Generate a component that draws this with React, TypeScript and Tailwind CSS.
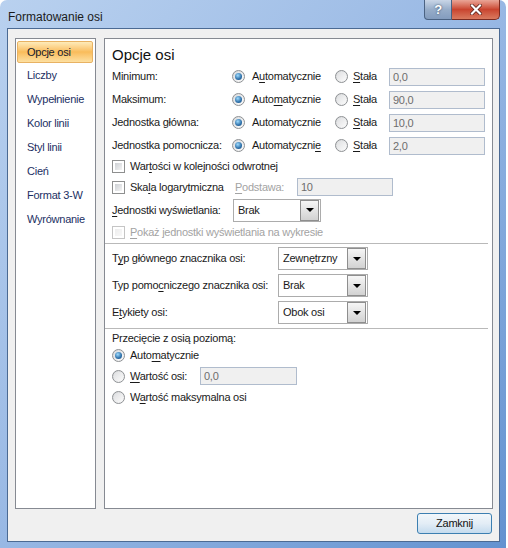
import React from 'react';

const navItems = ['Liczby', 'Wypełnienie', 'Kolor linii', 'Styl linii', 'Cień', 'Format 3-W', 'Wyrównanie'];

// underlined access-key letter
const U: React.FC<{ children: React.ReactNode }> = ({ children }) => <span className="underline underline-offset-[2px]">{children}</span>;

const Radio: React.FC<{ on?: boolean }> = ({ on }) => (
  <span className="relative inline-block w-[13px] h-[13px] shrink-0 rounded-full border border-[#8e9194] bg-gradient-to-br from-[#d6d8da] to-[#fbfbfb]">
    <span className="absolute inset-[1px] rounded-full bg-gradient-to-br from-[#dfe0e2] to-[#fafafa]" />
    {on && (
      <span className="absolute left-[2px] top-[2px] w-[7px] h-[7px] rounded-full bg-[radial-gradient(circle_at_40%_35%,#9fdcff,#2d6fa8_60%,#1d4f80)]" />
    )}
  </span>
);

const Check: React.FC<{ disabled?: boolean }> = ({ disabled }) => (
  <span className={`inline-block w-[13px] h-[13px] shrink-0 border p-[2px] bg-white ${disabled ? 'border-[#c5c5c5]' : 'border-[#8e8f8f]'}`}>
    <span className={`block w-full h-full bg-gradient-to-br ${disabled ? 'from-[#eeeeee] to-[#f8f8f8]' : 'from-[#cdd0d4] to-[#f4f4f4]'}`} />
  </span>
);

const Field: React.FC<{ value: string; w: string }> = ({ value, w }) => (
  <div className={`${w} h-[18px] border border-[#b0bccd] bg-[#f0f0f0] text-[#6d6d6d] pl-[3px] leading-[16px]`}>{value}</div>
);

const Select: React.FC<{ value: string; w: string }> = ({ value, w }) => (
  <div className={`${w} h-[23px] border border-[#acacac] bg-white flex items-center justify-between pl-[4px] pr-[1px]`}>
    <span>{value}</span>
    <span className="w-[19px] h-[21px] border border-[#8e8e8e] bg-gradient-to-b from-[#f6f6f6] to-[#d2d2d2] flex items-center justify-center">
      <span className="w-0 h-0 border-l-[4px] border-r-[4px] border-t-[4px] border-l-transparent border-r-transparent border-t-black" />
    </span>
  </div>
);

const Sep: React.FC = () => <div className="-ml-[7px] mr-[4px] h-px bg-[#b9b9b9]" />;

export default function App() {
  return (
    <div className="w-[508px] h-[548px] bg-white font-['Liberation_Sans',Arial,sans-serif] text-[11px] tracking-[-0.25px] text-[#1a1a1a]">
      <div className="w-[506px] h-[548px] rounded-t-[7px] bg-gradient-to-br from-[#b9d1ef] via-[#98b8e4] to-[#6392d0] flex flex-col">
        {/* title bar */}
        <div className="h-[28px] flex items-start">
          <div className="pl-[8px] pt-[8px] text-[12px] tracking-normal text-[#1b1b1b]">Formatowanie osi</div>
          <div className="flex-1" />
          <div className="w-[28px] h-[20px] rounded-bl-[4px] border border-t-0 border-[#4a6282] bg-gradient-to-b from-[#c9d6e7] via-[#97adc9] to-[#839cbe] flex items-center justify-center text-white font-bold text-[13px] [text-shadow:0_0_2px_#1f3553]">
            ?
          </div>
          <div className="w-[48px] h-[20px] mr-[6px] rounded-br-[5px] border border-t-0 border-l-0 border-[#7c2b21] bg-gradient-to-b from-[#e9a597] via-[#c9442f] to-[#d97a5f] flex items-center justify-center">
            <svg width="12" height="11" viewBox="0 0 12 11">
              <path d="M2 1.5 L10 9.5 M10 1.5 L2 9.5" stroke="#4d1a12" strokeWidth="3.6" strokeLinecap="square" />
              <path d="M2 1.5 L10 9.5 M10 1.5 L2 9.5" stroke="#ffffff" strokeWidth="2.2" strokeLinecap="square" />
            </svg>
          </div>
        </div>

        {/* client area */}
        <div className="ml-[7px] w-[493px] h-[514px] border border-[#4b6a93] bg-[#f0f0f0] flex flex-col">
          <div className="flex pl-[7px] pt-[9px] gap-[8px]">
            {/* nav */}
            <div className="w-[81px] h-[471px] border border-[#868a92] bg-white text-[#1c2f63]">
              <div className="mt-[2px] ml-px mr-[2px] h-[22px] rounded-[2px] border border-[#e8b263] bg-gradient-to-b from-[#feebb9] via-[#f9bc5a] to-[#fde0a0] flex items-center pl-[9px] text-[#141a2e]">
                Opcje osi
              </div>
              {navItems.map((n) => (
                <div key={n} className="h-[24px] flex items-center pl-[11px]">{n}</div>
              ))}
            </div>

            {/* main panel */}
            <div className="w-[389px] h-[471px] border border-[#868a92] bg-white pl-[7px] pt-[6px]">
              <div className="h-[20px] flex items-center text-[15px] tracking-normal text-[#111]">Opcje osi</div>

              {[
                ['Minimum:', <>A<U>u</U>tomatycznie</>, '0,0'],
                ['Maksimum:', <>Auto<U>m</U>atycznie</>, '90,0'],
                ['Jednostka główna:', <>Automatycznie</>, '10,0'],
                ['Jednostka pomocnicza:', <>Automatyczni<U>e</U></>, '2,0'],
              ].map(([label, auto, val], i) => (
                <div key={i} className="h-[23px] flex items-center">
                  <div className="w-[120px]">{label}</div>
                  <div className="w-[103px] flex items-center gap-[7px]">
                    <Radio on />
                    <span>{auto}</span>
                  </div>
                  <div className="w-[54px] flex items-center gap-[5px]">
                    <Radio />
                    <span><U>S</U>tała</span>
                  </div>
                  <Field value={val as string} w="w-[96px]" />
                </div>
              ))}

              <div className="h-[19px] flex items-center gap-[5px]">
                <Check />
                <span>War<U>t</U>ości w kolejności odwrotnej</span>
              </div>
              <div className="h-[22px] flex items-center">
                <div className="w-[123px] flex items-center gap-[5px]">
                  <Check />
                  <span>Ska<U>l</U>a logarytmiczna</span>
                </div>
                <div className="w-[62px] text-[#a3a3a3]"><U>P</U>odstawa:</div>
                <Field value="10" w="w-[96px]" />
              </div>
              <div className="h-[24px] flex items-center">
                <div className="w-[121px]"><U>J</U>ednostki wyświetlania:</div>
                <Select value="Brak" w="w-[88px]" />
              </div>
              <div className="h-[20px] flex items-center gap-[5px] text-[#a3a3a3]">
                <Check disabled />
                <span><U>P</U>okaż jednostki wyświetlania na wykresie</span>
              </div>
              <div className="mt-px">
                <Sep />
              </div>

              <div className="mt-px">
                {[
                  [<>T<U>y</U>p głównego znacznika osi:</>, 'Zewnętrzny'],
                  [<>Typ pomo<U>c</U>niczego znacznika osi:</>, 'Brak'],
                  [<>E<U>t</U>ykiety osi:</>, 'Obok osi'],
                ].map(([label, val], i) => (
                  <div key={i} className="h-[27px] flex items-center">
                    <div className="w-[166px]">{label}</div>
                    <Select value={val as string} w="w-[90px]" />
                  </div>
                ))}
              </div>
              <div className="mt-[2px]">
                <Sep />
              </div>

              <div className="mt-px h-[16px] flex items-center">Przecięcie z osią poziomą:</div>
              <div className="h-[18px] flex items-center gap-[5px]">
                <Radio on />
                <span>Auto<U>m</U>atycznie</span>
              </div>
              <div className="h-[24px] flex items-center">
                <div className="w-[88px] flex items-center gap-[5px]">
                  <Radio />
                  <span><U>W</U>artość osi:</span>
                </div>
                <Field value="0,0" w="w-[97px]" />
              </div>
              <div className="h-[18px] flex items-center gap-[5px]">
                <Radio />
                <span>W<U>a</U>rtość maksymalna osi</span>
              </div>
            </div>
          </div>

          <div className="flex justify-end pr-[7px] mt-[4px]">
            <div className="w-[75px] h-[21px] rounded-[3px] border border-[#3c7fb1] bg-gradient-to-b from-[#f2f7fb] via-[#e3edf6] to-[#c4dbee] flex items-center justify-center text-[#111]">
              Zamknij
            </div>
          </div>
        </div>
      </div>
    </div>
  );
}
